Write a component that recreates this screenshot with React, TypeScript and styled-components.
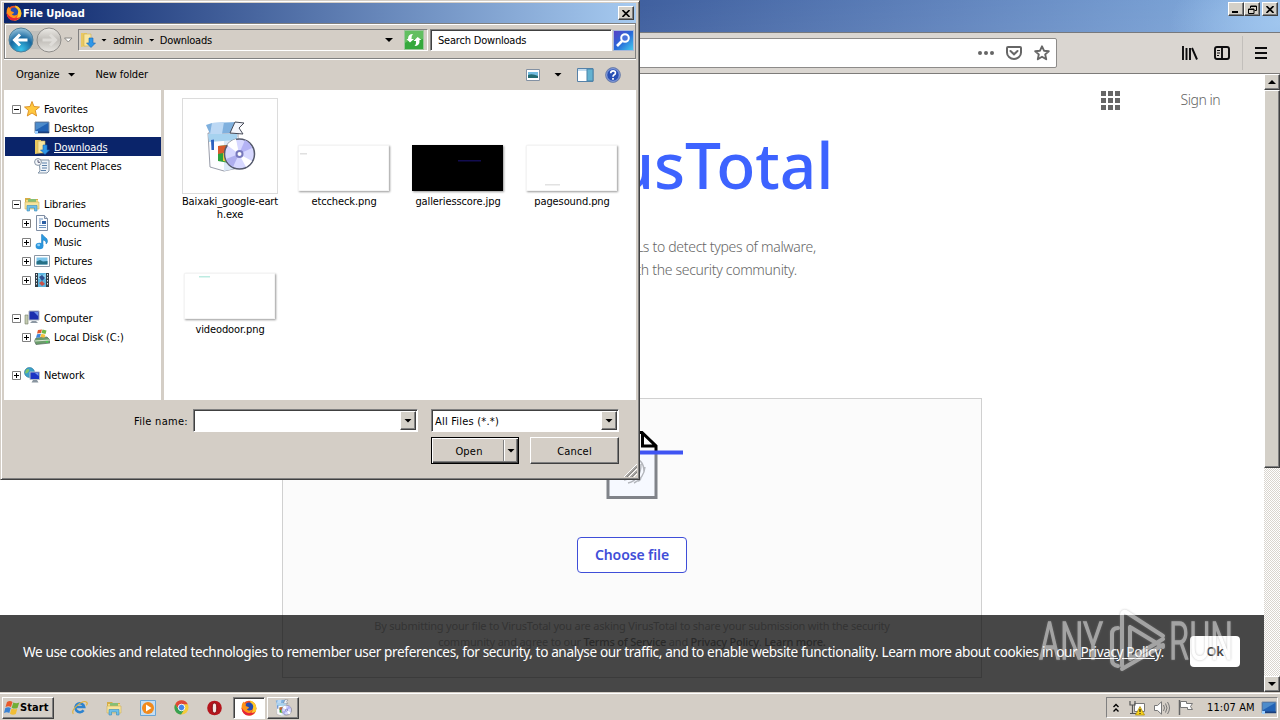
import React from 'react';
import styled, { createGlobalStyle, css } from 'styled-components';

interface TreeItem {
  label?: string;
  icon?: string;
  child?: boolean;
  sign?: '+' | '-';
  selected?: boolean;
}

interface FileItem {
  name: string;
  kind: 'exe' | 'white' | 'black';
  mark?: [number, number, number, string];
}

const treeItems: TreeItem[] = [
  { label: 'Favorites', icon: 'star', sign: '-' },
  { label: 'Desktop', icon: 'desktop', child: true },
  { label: 'Downloads', icon: 'downloads', child: true, selected: true },
  { label: 'Recent Places', icon: 'recent', child: true },
  {},
  { label: 'Libraries', icon: 'libraries', sign: '-' },
  { label: 'Documents', icon: 'document', child: true, sign: '+' },
  { label: 'Music', icon: 'music', child: true, sign: '+' },
  { label: 'Pictures', icon: 'pictures', child: true, sign: '+' },
  { label: 'Videos', icon: 'videos', child: true, sign: '+' },
  {},
  { label: 'Computer', icon: 'computer', sign: '-' },
  { label: 'Local Disk (C:)', icon: 'disk', child: true, sign: '+' },
  {},
  { label: 'Network', icon: 'network', sign: '+' },
];

const files: FileItem[] = [
  { name: 'Baixaki_google-earth.exe', kind: 'exe' },
  { name: 'etccheck.png', kind: 'white', mark: [1, 8, 7, '#e0e0e0'] },
  { name: 'galleriesscore.jpg', kind: 'black', mark: [45, 15, 23, '#120c50'] },
  { name: 'pagesound.png', kind: 'white', mark: [18, 39, 15, '#e2e2e2'] },
  { name: 'videodoor.png', kind: 'white', mark: [14, 3, 11, '#bdebe1'] },
];

const Firefox = ({ size = 16 }: { size?: number }) => (
  <svg width={size} height={size} viewBox="0 0 16 16">
    <circle cx="8" cy="8.2" r="7.4" fill="#f2501f" />
    <path d="M9 .5C14 1.5 16 6 15.2 10 14.4 14 11 15.8 8 15.7 12 13 13 8 10 4.500Z" fill="#ffc928" />
    <circle cx="8" cy="6.800" r="4.200" fill="#274cae" />
    <path d="M.7 8C.4 4.500 1.500 2.500 3 1.500c0 1.500.5 2 2 2.300C4 5.500 5 6.800 7.500 7c1 .5 0 2-1.700 2 1.200 2 3.500 2 5.500.8C10.500 14 4 14.500 1.800 11.500Z" fill="#ff9419" />
    <path d="M.8 8c0 4 3.200 7.500 7.200 7.500 3 0 5.200-1.500 6.500-4C11 14 5 14.500.8 8Z" fill="#e3243b" />
  </svg>
);

const Installer = ({ size = 52 }: { size?: number }) => (
  <svg width={size} height={size} viewBox="0 0 52 52">
    <path d="M4 13 6 47l14 4 14-3V13Z" fill="#fdfdff" stroke="#7f8494" strokeWidth=".8" />
    <path d="M20 17h14v31l-14 3Z" fill="#dbe8f6" />
    <path d="m2 5 6-2 25-1-3 11-24 1Z" fill="#7fb0de" />
    <path d="m8 3 12-1-2 12H6Z" fill="#bcd8f4" />
    <path d="m31 2 9 1-5 5 4 6-13-1Z" fill="#f4f6fc" stroke="#474b58" />
    <path d="M4 14h29v6L5 22Z" fill="#a6d2ef" />
    <path d="m14 26 11-1v18l-11-2Z" fill="#2ba03c" />
    <path d="m14 26 11-1v7l-11 2Z" fill="#d8592c" />
    <path d="m19 33 7-1v10l-7-1Z" fill="#ebce3b" />
    <path d="m7 20 3-.5V30H7.500z" fill="#2c62c0" />
    <circle cx="35.500" cy="34" r="15" fill="#d7d8ff" stroke="#555a6c" strokeWidth="1.500" />
    <path d="M35 34 23 25a15 15 0 0 1 9-6Z" fill="#fff" />
    <path d="m35 34 6-14a15 15 0 0 1 7 8Z" fill="#b4b3f5" />
    <path d="m35 34 13 7a15 15 0 0 1-6 6Z" fill="#fff" />
    <path d="m35 34-6 13a15 15 0 0 1-7-8Z" fill="#afafee" />
    <circle cx="35.500" cy="34" r="4" fill="#7778bc" />
    <circle cx="35.500" cy="34" r="2" fill="#fff" />
  </svg>
);

const Icon = ({ name }: { name: string }) => (
  <svg width="16" height="16" viewBox="0 0 16 16">
    {name === 'star' && <path d="m8 .5 2 5 5.500.5-4.200 3.500 1.300 5.500L8 12l-4.700 3 1.300-5.500L.5 6 6 5.500Z" fill="#ffc83f" stroke="#d98c20" strokeWidth=".9" />}
    {name === 'desktop' && (
      <>
        <path d="M1 2h14v11H1z" fill="#2262b4" stroke="#7c8fa3" />
        <path d="M2 3h12L2 10z" fill="#4d8ccb" />
        <path d="M1 11.500h14v1.500H1z" fill="#1b3f7c" />
        <path d="M1 11h3v3H1z" fill="#9ed0ff" />
      </>
    )}
    {name === 'downloads' && (
      <>
        <path d="M1 1h6v13l-6 1Z" fill="#e9c860" />
        <path d="M4 2h7v12H4z" fill="#f8e6a0" stroke="#cfae50" strokeWidth=".6" />
        <path d="M9 6h4v5h2.500L11 15.500 6.500 11H9Z" fill="#2e97e8" stroke="#1767b4" strokeWidth=".6" />
      </>
    )}
    {name === 'recent' && (
      <>
        <path d="M5 2h10v11l-2 2H4l2-2Z" fill="#eef3f8" stroke="#8495a8" />
        <path d="M8 5h5M8 7.500h5M8 10h5M7 12.500h5" stroke="#5a7fa8" />
        <circle cx="4" cy="4" r="3.400" fill="#f4f7fa" stroke="#8694a5" />
        <path d="M4 2v2.300h2" stroke="#335" fill="none" strokeWidth=".8" />
      </>
    )}
    {name === 'libraries' && (
      <>
        <path d="M1 2h5l1 1h7v5H1z" fill="#d5ad47" />
        <path d="M2 4h12v9H2z" fill="#f5dc84" />
        <path d="M4 3h8v3H4z" fill="#85bf75" />
        <path d="M1 6h14v7H1z" fill="#f7e49c" stroke="#cfae55" strokeWidth=".6" />
        <path d="M3 15V9.500h10V15h-2.500v-3h-5v3Z" fill="#6fbfe8" stroke="#398bb8" strokeWidth=".6" />
      </>
    )}
    {name === 'document' && (
      <>
        <path d="M2.500.5h8l3 3v12h-11z" fill="#fbfcfe" stroke="#7e8da3" />
        <path d="M10.500.5v3h3" fill="#d5deea" stroke="#7e8da3" />
        <path d="M5 4h4M5 6h2M5 8h2M5 10.500h7M5 12.500h7" stroke="#6c93bf" />
        <path d="M8 6h4v3H8z" fill="#2c5fa4" />
      </>
    )}
    {name === 'music' && (
      <>
        <path d="M8.500.5c1 2.500 5 3 5 6.500 0 1.500-.7 2.500-1.500 3 .5-3-1.500-3.500-3-4v6H7.500V.5Z" fill="#2b9ae0" stroke="#1c75b7" strokeWidth=".5" />
        <ellipse cx="5.500" cy="12" rx="3.900" ry="3.300" fill="#2b95dc" />
        <ellipse cx="4.600" cy="11" rx="1.500" ry="1.200" fill="#8ed0f7" />
      </>
    )}
    {name === 'pictures' && (
      <>
        <path d="M.5 2.500h15v11H.5z" fill="#fff" stroke="#8b97a5" />
        <path d="M2.500 4.500h11v7h-11z" fill="#7cc5ea" />
        <path d="M2.500 8.500 6 7l3 1.500 4.500-.5v3.500h-11z" fill="#257086" />
      </>
    )}
    {name === 'videos' && (
      <>
        <path d="M1 1h14v14H1z" fill="#333d46" />
        <path d="M4 1h8v14H4z" fill="#5bb4df" />
        <path d="m4 1 4 3 4-3v6H4z" fill="#8ad0ee" />
        <path d="m5 5 3-2 3 3-3 3z" fill="#314f90" />
        <path d="m5 11 3-2 3 3-3 2z" fill="#c75049" />
        <path d="M2.500 2v12M13.500 2v12" stroke="#e8eef2" strokeDasharray="1.500 1.500" />
      </>
    )}
    {name === 'computer' && (
      <>
        <path d="M1 5h3v9H1z" fill="#c4cbb0" stroke="#75806b" strokeWidth=".6" />
        <path d="M5 1h10v9H5z" fill="#1b2fae" stroke="#aab3bd" />
        <path d="M10 2h4v4z" fill="#6d91ea" />
        <path d="M8 11h4l2 2H6z" fill="#8d98a3" />
      </>
    )}
    {name === 'disk' && (
      <>
        <path d="m2 9 11-1 3 3v3L2 15.500.5 12Z" fill="#6b9d6b" stroke="#586a60" strokeWidth=".7" />
        <path d="m.5 12 15.500-1" stroke="#dbe9d6" />
        <path d="m4 1 4-.5L7 4 3 4.500z" fill="#e25b32" />
        <path d="m8.500.5 4 1-1 3.500-4-1z" fill="#72b844" />
        <path d="M3 5.200 7 4.700 6 8.200l-4 .5z" fill="#3d87db" />
        <path d="m7.400 4.800 4 1-1 3-4-.7z" fill="#f4c23c" />
        <circle cx="13" cy="12.800" r=".9" fill="#39e14b" />
      </>
    )}
    {name === 'network' && (
      <>
        <circle cx="5.500" cy="5.500" r="5" fill="#3ca1cb" stroke="#247196" strokeWidth=".6" />
        <path d="M2 3c2-2 4-1 3 1S2 7 1 6Z" fill="#7fc66b" />
        <path d="M6 5h9.500v7.500H6z" fill="#1d35c4" stroke="#b5bdc8" />
        <path d="M11 6h3.500v3z" fill="#7596ef" />
        <path d="M9 13h4l1.500 2.500h-7z" fill="#8995a0" />
      </>
    )}
  </svg>
);

const FileView = ({ file }: { file: FileItem }) => (
  <FileCell>
    <ThumbArea>
      {file.kind === 'exe' ? (
        <ExeFrame>
          <Installer />
        </ExeFrame>
      ) : (
        <Thumb $dark={file.kind === 'black'}>
          <svg width="89" height="44">
            {file.mark && <rect x={file.mark[0]} y={file.mark[1] - 1} width={file.mark[2]} height="1.500" fill={file.mark[3]} />}
          </svg>
        </Thumb>
      )}
    </ThumbArea>
    <FileName>{file.name}</FileName>
  </FileCell>
);

const FileDialog = () => (
  <Dialog>
    <DialogTitle>
      <Firefox />
      <b>File Upload</b>
      <WinButton>
        <svg width="8" height="7" viewBox="0 0 8 7"><path d="m.5 0 7 7m0-7-7 7" stroke="#000" strokeWidth="1.600" /></svg>
      </WinButton>
    </DialogTitle>

    <AddressRow>
      <svg width="70" height="28" viewBox="0 0 70 28">
        <defs>
          <radialGradient id="back" cx=".5" cy=".9" r=".9">
            <stop offset="0" stopColor="#39c4ec" />
            <stop offset=".55" stopColor="#17689f" />
            <stop offset="1" stopColor="#9cc7de" />
          </radialGradient>
          <linearGradient id="fwd" x2="0" y2="1">
            <stop stopColor="#eceae6" />
            <stop offset=".5" stopColor="#c0bdb8" />
            <stop offset="1" stopColor="#e8e6e2" />
          </linearGradient>
        </defs>
        <path d="M16 3q14 4 28 0v22q-14-4-28 0Z" fill="#c1bfbb" />
        <circle cx="16" cy="14" r="12" fill="url(#back)" stroke="#50809a" />
        <path d="M9.500 14h13M15 8.500 9.500 14l5.500 5.500" fill="none" stroke="#fff" strokeWidth="3" />
        <circle cx="44" cy="14" r="12" fill="url(#fwd)" stroke="#8f8d8a" />
        <path d="M37.500 14h13M45 8.500l5.500 5.500-5.500 5.500" fill="none" stroke="#dedcd8" strokeWidth="3" />
        <path d="M59.500 12h7.500l-3.700 4Z" fill="#fff" stroke="#8a8884" />
      </svg>
      <AddressBox>
        <Icon name="downloads" />
        <Caret $left={5} />
        <Crumb $left={6}>admin</Crumb>
        <Caret $left={6} />
        <Crumb $left={5}>Downloads</Crumb>
        <Spacer />
        <Caret $right={11} $big />
        <svg width="20" height="20" viewBox="0 0 20 20">
          <path d="M.5.5h19v19H.5z" fill="#35a83c" stroke="#9ac79a" />
          <path d="M1 1h18v8Q8 8 1 13Z" fill="#62bf60" />
          <path d="M4 9q0-5 5-5-2 2-1.500 5H10l-4 3.500L2.500 9ZM15.500 10q.5 6-5 6 2-2 1.500-5H9.500l4.200-4L17.500 10Z" fill="#fff" />
        </svg>
      </AddressBox>
      <SearchBox>Search Downloads</SearchBox>
      <svg width="21" height="21" viewBox="0 0 21 21">
        <defs>
          <linearGradient id="find" x2="1" y2="1">
            <stop stopColor="#5a3fc4" />
            <stop offset=".5" stopColor="#2769d8" />
            <stop offset="1" stopColor="#46d0ee" />
          </linearGradient>
        </defs>
        <path d="M.5.5h20v20H.5z" fill="url(#find)" stroke="#a9b9da" />
        <circle cx="12" cy="8" r="3.800" fill="#4a73dc" stroke="#fff" strokeWidth="2" />
        <path d="m9 11-5 5" stroke="#fff" strokeWidth="2.600" />
      </svg>
    </AddressRow>

    <ActionRow>
      <span>Organize</span>
      <Caret $left={8} $big />
      <NewFolder>New folder</NewFolder>
      <Spacer />
      <svg width="14" height="12" viewBox="0 0 14 12">
        <path d="M.5.5h13v11H.5z" fill="#fff" stroke="#8391a3" />
        <path d="M2 3h10v6H2z" fill="#73bce0" />
        <path d="M2 6q4-2 10 1v2H2z" fill="#246c72" />
      </svg>
      <Caret $left={14} $right={15} $big />
      <svg width="17" height="14" viewBox="0 0 17 14">
        <path d="M.5.5h15.500v13H.5z" fill="#fff" stroke="#5681a8" />
        <path d="M1 1h15v2H1z" fill="#c4dcef" />
        <path d="M10 1h6v12h-6z" fill="#64b2d0" stroke="#4b83a8" />
      </svg>
      <HelpIcon>
        <svg width="16" height="16" viewBox="0 0 16 16">
          <circle cx="8" cy="8" r="7.400" fill="#2950b4" stroke="#7888ac" />
          <circle cx="8" cy="8" r="6.300" fill="none" stroke="#c8d4f2" strokeWidth=".7" />
          <path d="M5.700 6.200q0-2.400 2.400-2.400t2.300 2.100q0 1.200-1.200 1.900Q8 8.600 8 9.800M8 11v1.800" stroke="#fff" fill="none" strokeWidth="1.700" />
        </svg>
      </HelpIcon>
    </ActionRow>

    <Panes>
      <Tree>
        {treeItems.map((item, i) => (
          <TreeRow key={i} $child={item.child} $selected={item.selected}>
            {item.label && (
              <>
                <Expander>
                  {item.sign && (
                    <svg width="9" height="9" viewBox="0 0 9 9">
                      <path d="M.5.5h8v8h-8z" fill="#fff" stroke="#808080" />
                      <path d={item.sign === '+' ? 'M2 4.500h5M4.500 2v5' : 'M2 4.500h5'} stroke="#000" />
                    </svg>
                  )}
                </Expander>
                <Icon name={item.icon!} />
                <TreeLabel $selected={item.selected}>{item.label}</TreeLabel>
              </>
            )}
          </TreeRow>
        ))}
      </Tree>
      <FileGrid>
        {files.map((file) => (
          <FileView key={file.name} file={file} />
        ))}
      </FileGrid>
    </Panes>

    <DialogFooter>
      <FooterRow>
        <FieldLabel>File name:</FieldLabel>
        <Combo $width={225}>
          <ComboText />
          <ComboArrow><Caret $big /></ComboArrow>
        </Combo>
        <Combo $width={188} $left={13}>
          <ComboText>All Files (*.*)</ComboText>
          <ComboArrow><Caret $big /></ComboArrow>
        </Combo>
      </FooterRow>
      <ButtonRow>
        <OpenButton>
          <span>Open</span>
          <OpenArrow><Caret $big /></OpenArrow>
        </OpenButton>
        <CancelButton>Cancel</CancelButton>
      </ButtonRow>
    </DialogFooter>
    <Grip>
      <svg width="13" height="13" viewBox="0 0 13 13">
        <path d="M0 13 13 0M5 13l8-8M10 13l3-3" stroke="#fff" />
        <path d="M1.500 13 13 1.500M6.500 13 13 6.500M3 13 13 3M8 13l5-5" stroke="#808080" />
      </svg>
    </Grip>
  </Dialog>
);

const Browser = () => (
  <BrowserWindow>
    <BrowserTitle>
      <WinButton><svg width="8" height="7"><path d="M0 6h6" stroke="#000" strokeWidth="2" /></svg></WinButton>
      <WinButton>
        <svg width="9" height="9" viewBox="0 0 9 9"><path d="M2.500 3V1h6v4.500h-2M.5 4h5.500v4.500H.5zM2.500 1.500h6M.5 4.500H6" fill="none" stroke="#000" /></svg>
      </WinButton>
      <WinButton $gap>
        <svg width="8" height="7" viewBox="0 0 8 7"><path d="m.5 0 7 7m0-7-7 7" stroke="#000" strokeWidth="1.600" /></svg>
      </WinButton>
    </BrowserTitle>
    <NavBar>
      <UrlBar>
        <svg width="16" height="4"><circle cx="2" cy="2" r="2" fill="#666" /><circle cx="8" cy="2" r="2" fill="#666" /><circle cx="14" cy="2" r="2" fill="#666" /></svg>
        <svg width="16" height="14" viewBox="0 0 16 14">
          <path d="M2 1h12q1 0 1 1v4.500a7 6.500 0 0 1-14 0V2q0-1 1-1Z" fill="none" stroke="#666" strokeWidth="2" />
          <path d="m4.500 5 3.500 3.300L11.500 5" fill="none" stroke="#666" strokeWidth="2" strokeLinecap="round" />
        </svg>
        <svg width="16" height="16" viewBox="0 0 16 16"><path d="m8 1.300 2 4.400 4.800.5-3.600 3.200 1 4.900L8 11.800l-4.200 2.500 1-4.900-3.600-3.200L6 5.700Z" fill="none" stroke="#666" strokeWidth="1.900" strokeLinejoin="round" /></svg>
      </UrlBar>
      <Spacer />
      <NavTools>
        <svg width="16" height="14" viewBox="0 0 16 14"><path d="M1 0v14M4.500 2v12M8 2v12M10 2l5 11.500" stroke="#0c0c0d" strokeWidth="1.900" /></svg>
        <svg width="16" height="14" viewBox="0 0 16 14">
          <path d="M3 1h10q2 0 2 2v8q0 2-2 2H3q-2 0-2-2V3q0-2 2-2ZM8 1v12" fill="none" stroke="#0c0c0d" strokeWidth="1.900" />
          <path d="M3 4.500h3M3 7h3M3 9.500h2" stroke="#0c0c0d" />
        </svg>
        <NavDivider />
        <svg width="12" height="12" viewBox="0 0 12 12"><path d="M0 1h12M0 6h12M0 11h12" stroke="#0c0c0d" strokeWidth="2" /></svg>
      </NavTools>
    </NavBar>
    <Viewport>
      <Page>
        <PageHeader>
          <svg width="19" height="19" viewBox="0 0 19 19">
            {[0, 7, 14].map((y) => [0, 7, 14].map((x) => <rect key={`${x}-${y}`} x={x} y={y} width="5" height="5" fill="#666" />))}
          </svg>
          <span>Sign in</span>
        </PageHeader>
        <PageTitle>
          <svg width="76" height="68" viewBox="0 0 76 68">
            <path d="M0 0h76v68H0l33-34ZM16 8l26 26-26 26h51V8Z" fill="#3d63ff" fillRule="evenodd" />
          </svg>
          <span>VirusTotal</span>
        </PageTitle>
        <Tagline>
          <p>Analyze suspicious files and URLs to detect types of malware,</p>
          <p>automatically share them with the security community.</p>
        </Tagline>
        <UploadCard>
          <UploadArt>
            <svg width="104" height="70" viewBox="0 0 104 70">
              <path d="M27 23h48v44H27z" fill="#f6f9ff" />
              <path d="M27 22v45.500h48V22" fill="none" stroke="#808389" strokeWidth="3" />
              <path d="M27 22V2.500h34L75 16v6M61.500 3v13H75" fill="none" stroke="#000" strokeWidth="3" />
              <g fill="none" stroke="#b2b5bb" strokeWidth="1.400">
                <path d="M43 50q12-2 12-16M47 53q13-3 13-19M53 53q10-5 11-16M40 46q10-2 10-11M40 38q0-9 10-10 13 0 13 14M57 51q2 0 3-3" />
              </g>
              <path d="M0 22.500h102" stroke="#3f54f3" strokeWidth="4" />
            </svg>
          </UploadArt>
          <ChooseButton>Choose file</ChooseButton>
          <Terms>
            <p>By submitting your file to VirusTotal you are asking VirusTotal to share your submission with the security</p>
            <p>community and agree to our <b>Terms of Service</b> and <b>Privacy Policy</b>. <b>Learn more.</b></p>
          </Terms>
        </UploadCard>
        <CookieBar>
          <CookieText>
            We use cookies and related technologies to remember user preferences, for security, to analyse our traffic, and to enable website functionality. Learn more about cookies in our <u>Privacy Policy</u>.
          </CookieText>
          <OkButton>Ok</OkButton>
        </CookieBar>
      </Page>
      <ScrollBar>
        <ScrollButton><Caret $big $up /></ScrollButton>
        <ScrollThumb />
        <Spacer />
        <ScrollButton><Caret $big /></ScrollButton>
      </ScrollBar>
    </Viewport>
  </BrowserWindow>
);

const TaskBar = () => (
  <Bar>
    <StartButton>
      <svg width="16" height="16" viewBox="0 0 16 16">
        <path d="M3 2q3-2 5.500 0L7 7Q4.500 5.500 1.500 7Z" fill="#e8592b" />
        <path d="M9.300 2.500q3 1.500 6 0L13.500 8q-3 1.300-5.800-.3Z" fill="#70ae36" />
        <path d="M1.300 8q3-1.500 5.500 0l-1.500 5Q3 11.500 0 13Z" fill="#3a82d4" />
        <path d="M7.500 8.500q3 1.500 5.800.3L11.800 14q-3 1.500-5.800-.3Z" fill="#f1bd35" />
      </svg>
      <b>Start</b>
    </StartButton>
    <QuickLaunch>
      <svg width="16" height="16" viewBox="0 0 18 16">
        <path d="M13 10.500a5 5 0 1 1 .8-3.500H5" fill="none" stroke="#2d83cf" strokeWidth="2.800" />
        <path d="M1.500 14.500C-2 10 12-2 16.500 1.500 17.500 2.500 17 4 16 5" fill="none" stroke="#e0b23e" strokeWidth="1.300" />
      </svg>
      <Icon name="libraries" />
      <svg width="16" height="16" viewBox="0 0 16 16">
        <path d="M.5.500h15v15H.5z" fill="#c5def3" stroke="#69a5d6" />
        <circle cx="8" cy="8" r="6" fill="#f28a1c" />
        <path d="m6 4.500 5.500 3.500L6 11.500Z" fill="#fff" />
      </svg>
      <svg width="15" height="15" viewBox="0 0 16 16">
        <circle cx="8" cy="8" r="7.500" fill="#f4cb3b" />
        <path d="M1.300 4.500A7.500 7.500 0 0 1 14.700 4.500H8L5 10Z" fill="#df4838" />
        <path d="M1.300 4.500A7.500 7.500 0 0 0 7.500 15.500L11 10H5Z" fill="#37a152" />
        <circle cx="8" cy="8" r="3.500" fill="#4685e8" stroke="#fff" />
      </svg>
      <svg width="15" height="16" viewBox="0 0 15 16"><circle cx="7.500" cy="8" r="7.300" fill="#b5151c" /><ellipse cx="7.500" cy="8" rx="2.300" ry="5" fill="#f5e9e5" stroke="#7d0e13" /></svg>
    </QuickLaunch>
    <TaskButton $active><Firefox /></TaskButton>
    <TaskButton><Installer size={17} /></TaskButton>
    <Spacer />
    <Tray>
      <svg width="8" height="10" viewBox="0 0 8 10"><path d="m1.500 4 2.500-2.500L6.500 4M1.500 8.500 4 6l2.500 2.500" fill="none" stroke="#000" strokeWidth="1.400" /></svg>
      <svg width="18" height="16" viewBox="-1 0 18 16">
        <path d="M5.500 3.500h10v8h-10z" fill="#fff" stroke="#777" />
        <path d="M1 1v4h5V1M3.500 5v8M1 13.500h6" fill="none" stroke="#555" strokeWidth="1.200" />
        <path d="m11 6.500 4.500 8.500H6.500Z" fill="#f8d21c" stroke="#a98800" strokeWidth=".7" />
        <path d="M11 9v3M11 13v1" stroke="#222" strokeWidth="1.200" />
      </svg>
      <svg width="16" height="14" viewBox="0 0 16 14">
        <path d="M.5 4.500h3L7.500.8v12.400l-4-3.700h-3z" fill="#fff" stroke="#777" />
        <path d="M9.500 4q2 3 0 6M11.500 2.500q3 4.500 0 9M13.500 1q4 6 0 12" fill="none" stroke="#777" />
      </svg>
      <svg width="16" height="15" viewBox="0 0 16 15"><path d="M1.500 0v15" stroke="#666" strokeWidth="1.500" /><path d="M2.500 1.500h6v2h6l-2 3 2 3h-5v-2h-7Z" fill="#fff" stroke="#777" /></svg>
      <Clock>11:07 AM</Clock>
      <Icon name="desktop" />
    </Tray>
  </Bar>
);

const App = () => (
  <>
    <GlobalStyle />
    <Screen>
      <Browser />
      <TaskBar />
      <FileDialog />
      <Watermark>
        <svg width="200" height="64" viewBox="0 0 200 64">
          <g fill="#fff" fontFamily="Roboto, sans-serif" fontSize="51" fontWeight="300">
            <text x="3" y="50" textLength="64" lengthAdjust="spacingAndGlyphs" stroke="#fff" strokeWidth="1.600">ANY</text>
            <text x="133" y="50" textLength="64" lengthAdjust="spacingAndGlyphs" stroke="#fff" strokeWidth="1.600">RUN</text>
          </g>
          <path d="M82 19q-6 0-6 6v26q0 5 6 6M86 57V6q0-4 4-3l37 24M94 18l33 20M94 18v32l33-20M86 60l41-24" fill="none" stroke="#fff" strokeWidth="4" strokeLinejoin="round" strokeLinecap="round" />
        </svg>
      </Watermark>
    </Screen>
  </>
);

export default App;

const GlobalStyle = createGlobalStyle`
  * {
    box-sizing: border-box;
  }

  body {
    margin: 0;
    overflow: hidden;
  }

  svg {
    display: block;
    flex: none;
  }

  p {
    margin: 0;
  }
`;

const raised = css`
  border: 1px solid;
  border-color: #fff #404040 #404040 #fff;
  box-shadow: inset -1px -1px #808080;
`;

const sunken = css`
  border: 1px solid;
  border-color: #808080 #fff #fff #808080;
  box-shadow: inset 1px 1px #404040;
`;

const Screen = styled.div`
  position: relative;
  display: flex;
  flex-direction: column;
  width: 1280px;
  height: 720px;
  overflow: hidden;
  color: #000;
  font: 11px/13px 'DejaVu Sans Condensed', 'DejaVu Sans', sans-serif;
  font-stretch: condensed;
  letter-spacing: -0.1px;
  white-space: nowrap;
`;

const Spacer = styled.div`
  flex: 1;
`;

const Caret = styled.i<{ $left?: number; $right?: number; $big?: boolean; $up?: boolean }>`
  flex: none;
  width: ${({ $big }) => ($big ? 8 : 6)}px;
  height: ${({ $big }) => ($big ? 4 : 3)}px;
  margin-left: ${({ $left = 0 }) => $left}px;
  margin-right: ${({ $right = 0 }) => $right}px;
  background: #000;
  clip-path: ${({ $up }) => ($up ? 'polygon(50% 0, 100% 100%, 0 100%)' : 'polygon(0 0, 100% 0, 50% 100%)')};
`;

const WinButton = styled.div<{ $gap?: boolean }>`
  display: flex;
  align-items: center;
  justify-content: center;
  width: 16px;
  height: 14px;
  margin-left: ${({ $gap }) => ($gap ? 2 : 0)}px;
  background: #d4d0c8;
  ${raised}
`;

/* browser */

const BrowserWindow = styled.div`
  display: flex;
  flex-direction: column;
  height: 692px;
`;

const BrowserTitle = styled.div`
  display: flex;
  justify-content: flex-end;
  height: 33px;
  padding: 2px 2px 0 0;
  border-bottom: 1px solid #77797d;
  background:
    radial-gradient(ellipse 110px 60px at 100% 70%, #a0c6ee, transparent),
    linear-gradient(176deg, transparent 40%, rgba(255, 255, 255, 0.08)),
    linear-gradient(90deg, #0a246a, #40609f 50%, #5f83bd 75%, #769fd4 93%, #83aee2);
`;

const NavBar = styled.div`
  display: flex;
  align-items: center;
  height: 41px;
  padding-bottom: 1px;
  background: #dad6d1;
  border-bottom: 1px solid #7d7b79;
`;

const UrlBar = styled.div`
  display: flex;
  align-items: center;
  justify-content: flex-end;
  gap: 12px;
  width: 937px;
  height: 30px;
  margin-left: 120px;
  padding-right: 6px;
  background: #fff;
  border: 1px solid #8d8b89;
  border-radius: 2px;
`;

const NavTools = styled.div`
  display: flex;
  align-items: center;
  gap: 16px;
  padding-right: 13px;
`;

const NavDivider = styled.div`
  width: 1px;
  height: 34px;
  margin: 0 -4px 0 -4px;
  background: #c2bfbb;
`;

const Viewport = styled.div`
  display: flex;
  flex: 1;
  min-height: 0;
`;

const Page = styled.div`
  position: relative;
  display: flex;
  flex-direction: column;
  align-items: center;
  width: 1264px;
  overflow: hidden;
  background: #fff;
  color: #666;
  font-family: 'Noto Sans', sans-serif;
  font-stretch: normal;
`;

const PageHeader = styled.div`
  display: flex;
  align-items: center;
  justify-content: flex-end;
  gap: 61px;
  width: 100%;
  height: 20px;
  margin-top: 16px;
  padding-right: 44px;
  font-size: 14px;
  font-weight: 300;
  line-height: 20px;
  letter-spacing: -0.5px;
`;

const PageTitle = styled.div`
  display: flex;
  align-items: center;
  gap: 24px;
  margin-top: 20px;
  color: #3d63ff;
  font-size: 64px;
  font-weight: 500;
  line-height: 70px;
`;

const Tagline = styled.div`
  display: flex;
  flex-direction: column;
  align-items: center;
  height: 46px;
  margin-top: 35px;
  font-size: 14px;
  font-weight: 300;
  line-height: 23px;
  letter-spacing: -0.3px;
`;

const UploadCard = styled.div`
  display: flex;
  flex-direction: column;
  align-items: center;
  flex: none;
  width: 700px;
  height: 280px;
  margin-top: 117px;
  padding-top: 31px;
  background: #fbfbfb;
  border: 1px solid #d0d0d0;
`;

const UploadArt = styled.div`
  padding-left: 2px;
`;

const ChooseButton = styled.div`
  width: 110px;
  height: 36px;
  margin-top: 37px;
  background: #fff;
  border: 1px solid #3f4ed8;
  border-radius: 4px;
  color: #3f4ed8;
  font-size: 14px;
  font-weight: 600;
  line-height: 34px;
  text-align: center;
`;

const Terms = styled.div`
  margin-top: 45px;
  color: #b0b0b0;
  font-size: 11px;
  line-height: 16px;
  text-align: center;
  letter-spacing: -0.21px;

  b {
    color: #8a8a8a;
    font-weight: 500;
  }
`;

const CookieBar = styled.div`
  position: absolute;
  left: 0;
  bottom: 0;
  display: flex;
  align-items: center;
  justify-content: space-between;
  width: 1264px;
  height: 77px;
  padding: 0 24px 4px 23px;
  background: rgba(10, 10, 10, 0.75);
  color: #fff;
`;

const CookieText = styled.div`
  font-size: 13.6px;
  line-height: 20px;
  letter-spacing: -0.38px;
`;

const OkButton = styled.div`
  flex: none;
  width: 50px;
  height: 31px;
  background: #fff;
  border-radius: 4px;
  color: #444;
  font-size: 13px;
  font-weight: 600;
  line-height: 31px;
  text-align: center;
`;

const ScrollBar = styled.div`
  display: flex;
  flex-direction: column;
  width: 16px;
  background: repeating-conic-gradient(#fff 0 25%, #d9d5ce 0 50%) 0 0 / 2px 2px;
`;

const ScrollButton = styled.div`
  display: flex;
  align-items: center;
  justify-content: center;
  height: 16px;
  background: #d4d0c8;
  ${raised}
`;

const ScrollThumb = styled.div`
  height: 378px;
  background: #d4d0c8;
  ${raised}
`;

/* taskbar */

const Bar = styled.div`
  display: flex;
  align-items: center;
  height: 28px;
  padding: 2px 2px 0;
  background: #d4cec6;
  border-top: 1px solid #d4cec6;
  box-shadow: inset 0 1px #fff;
`;

const StartButton = styled.div`
  display: flex;
  align-items: center;
  width: 52px;
  height: 22px;
  padding-left: 1px;
  letter-spacing: 0.1px;
  ${raised}
`;

const QuickLaunch = styled.div`
  display: flex;
  align-items: center;
  justify-content: space-between;
  width: 150px;
  margin: 0 11px 0 18px;
`;

const TaskButton = styled.div<{ $active?: boolean }>`
  display: flex;
  align-items: center;
  justify-content: center;
  width: 32px;
  height: 22px;
  margin-right: 2px;
  ${raised}
  ${({ $active }) => $active && sunken}
  ${({ $active }) => $active && 'background: #fff;'}
`;

const Tray = styled.div`
  display: flex;
  align-items: center;
  gap: 8px;
  width: 172px;
  height: 21px;
  padding-left: 5px;
  border: 1px solid;
  border-color: #808080 #fff #fff #808080;
`;

const Clock = styled.span`
  margin: 0 -2px 0 5px;
  letter-spacing: 0.1px;
`;

/* file dialog */

const Dialog = styled.div`
  position: absolute;
  top: 0;
  left: 0;
  display: flex;
  flex-direction: column;
  width: 640px;
  height: 480px;
  padding: 2px 2px 0 2px;
  background: #d4cec6;
  border: 1px solid;
  border-color: #d4cec6 #404040 #404040 #d4cec6;
  box-shadow: inset 1px 1px #fff, inset -1px -1px #808080;
`;

const DialogTitle = styled.div`
  display: flex;
  align-items: center;
  height: 20px;
  margin: 0 1px;
  padding: 0 2px;
  background: linear-gradient(90deg, #0a246a, #a6caf0);
  color: #fff;
  letter-spacing: -0.1px;

  b {
    flex: 1;
    margin-left: 1px;
  }
`;

const AddressRow = styled.div`
  display: flex;
  align-items: center;
  height: 36px;
  margin: 0 1px;
  padding: 0 0 2px;
  border: 1px solid #808080;
  box-shadow: inset 1px 1px #fff, 0 1px #fff;
`;

const AddressBox = styled.div`
  display: flex;
  align-items: center;
  width: 350px;
  height: 22px;
  margin-left: 3px;
  padding: 0 3px 0 1px;
  border: 1px solid;
  border-color: #808080 #fff #fff #808080;
`;

const Crumb = styled.span<{ $left: number }>`
  margin-left: ${({ $left }) => $left}px;
  letter-spacing: -0.25px;
`;

const SearchBox = styled.div`
  width: 182px;
  height: 22px;
  margin: 0 1px 0 2px;
  padding: 4px 7px;
  background: #fff;
  letter-spacing: -0.2px;
  ${sunken}
`;

const ActionRow = styled.div`
  display: flex;
  align-items: center;
  height: 31px;
  padding: 0 16px 0 13px;
`;

const NewFolder = styled.span`
  margin-left: 20px;
`;

const HelpIcon = styled.div`
  margin-left: 11px;
`;

const Panes = styled.div`
  display: flex;
  height: 310px;
  margin: 0 1px;
`;

const Tree = styled.div`
  width: 160px;
  padding: 9px 2px 0 1px;
  border-right: 3px solid #d4cec6;
  background: #fff;
`;

const TreeRow = styled.div<{ $child?: boolean; $selected?: boolean }>`
  display: flex;
  align-items: center;
  width: 156px;
  height: 19px;
  padding-left: ${({ $child }) => ($child ? 17 : 7)}px;
  background: ${({ $selected }) => ($selected ? '#0a246a' : 'transparent')};
`;

const Expander = styled.div`
  width: 12px;
  padding-top: 1px;
`;

const TreeLabel = styled.span<{ $selected?: boolean }>`
  margin-left: 4px;
  padding-top: 2px;
  color: ${({ $selected }) => ($selected ? '#fff' : '#000')};
  text-decoration: ${({ $selected }) => ($selected ? 'underline' : 'none')};
`;

const FileGrid = styled.div`
  display: grid;
  flex: 1;
  grid-template-columns: repeat(4, 114px);
  grid-auto-rows: 128px;
  padding: 8px 0 0 9px;
  background: #fff;
`;

const FileCell = styled.div`
  display: flex;
  flex-direction: column;
  align-items: center;
`;

const ThumbArea = styled.div`
  display: flex;
  align-items: flex-end;
  height: 96px;
`;

const ExeFrame = styled.div`
  display: flex;
  align-items: center;
  justify-content: center;
  width: 96px;
  height: 96px;
  border: 1px solid #dcdcdc;
`;

const Thumb = styled.div<{ $dark?: boolean }>`
  width: 91px;
  height: 46px;
  margin: 0 1px 3px 0;
  border: 1px solid ${({ $dark }) => ($dark ? '#000' : '#f4f4f4')};
  background: ${({ $dark }) => ($dark ? '#000' : '#fff')};
  box-shadow: 1px 1px 2px #999;
`;

const FileName = styled.div`
  width: 97px;
  margin-top: 1px;
  text-align: center;
  white-space: normal;
  word-break: break-all;
`;

const DialogFooter = styled.div`
  display: flex;
  flex-direction: column;
  padding: 9px 18px 0 0;
  letter-spacing: 0.2px;
`;

const FooterRow = styled.div`
  display: flex;
  align-items: center;
  justify-content: flex-end;
`;

const FieldLabel = styled.span`
  margin-right: 5px;
  padding-top: 1px;
  letter-spacing: 0.3px;
`;

const Combo = styled.div<{ $width: number; $left?: number }>`
  display: flex;
  width: ${({ $width }) => $width}px;
  height: 23px;
  margin-left: ${({ $left = 0 }) => $left}px;
  padding: 1px;
  background: #fff;
  ${sunken}
`;

const ComboText = styled.span`
  flex: 1;
  padding-left: 2px;
  line-height: 21px;
`;

const ComboArrow = styled.div`
  display: flex;
  align-items: center;
  justify-content: center;
  width: 16px;
  background: #d4d0c8;
  ${raised}
`;

const ButtonRow = styled.div`
  display: flex;
  justify-content: flex-end;
  gap: 11px;
  margin-top: 5px;
`;

const CancelButton = styled.div`
  width: 89px;
  height: 27px;
  line-height: 27px;
  text-align: center;
  ${raised}
`;

const OpenButton = styled.div`
  display: flex;
  width: 88px;
  height: 27px;
  border: 1px solid #000;
  box-shadow: inset 1px 1px #fff, inset -1px -1px #404040, inset -2px -2px #808080;

  span {
    flex: 1;
    padding-left: 3px;
    line-height: 27px;
    text-align: center;
  }
`;

const OpenArrow = styled.div`
  display: flex;
  align-items: center;
  width: 15px;
  margin: 2px 0;
  padding-left: 3px;
  border-left: 1px solid #808080;
  box-shadow: inset 1px 0 #fff;
`;

const Grip = styled.div`
  position: absolute;
  right: 2px;
  bottom: 2px;
`;

const Watermark = styled.div`
  position: absolute;
  top: 609px;
  left: 1036px;
  opacity: 0.5;
  filter: drop-shadow(0 0 1px #888);
`;
